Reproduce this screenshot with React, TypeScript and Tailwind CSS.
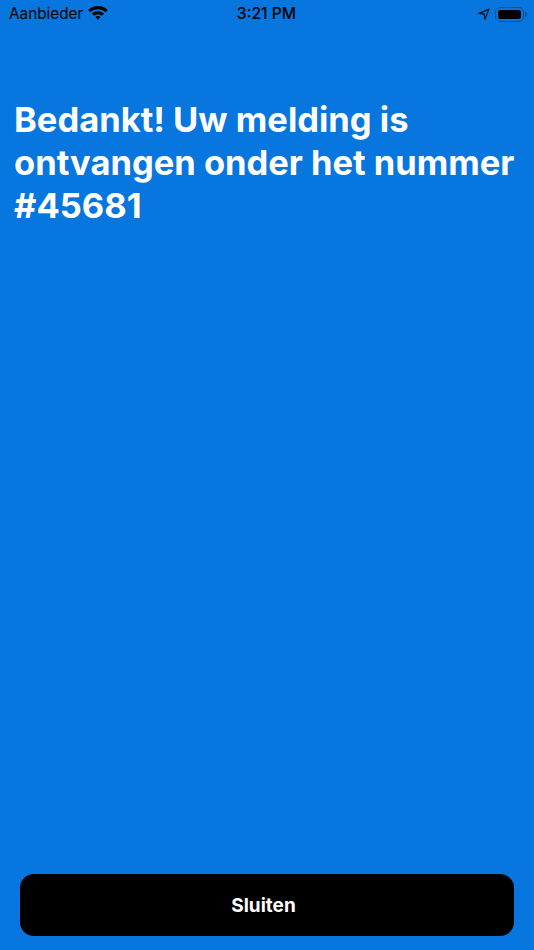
export default function App() {
  return (
    <div className="flex h-[950px] w-[534px] flex-col overflow-hidden bg-[#0776de] font-['Inter',sans-serif] text-white">
      <div className="flex h-[28px] items-center justify-between pr-[7px] pl-[9px] text-black">
        <div className="flex w-[180px] items-center gap-[5px]">
          <span className="text-[15.3px] leading-[28px]">Aanbieder</span>
          <svg width="20" height="15" viewBox="0 0 20 15" className="mb-[3px]">
            <path d="M0.2 5 A14 14 0 0 1 19.8 5 L17.6 7.3 A11 11 0 0 0 2.4 7.3 Z" fill="#000" />
            <path d="M3.9 8.6 A8.8 8.8 0 0 1 16.1 8.6 L13.9 10.8 A5.8 5.8 0 0 0 6.1 10.8 Z" fill="#000" />
            <path d="M7.5 12.1 A3.6 3.6 0 0 1 12.5 12.1 L10 14.8 Z" fill="#000" />
          </svg>
        </div>
        <span className="pr-[3px] text-[15.7px] leading-[28px] font-medium">3:21 PM</span>
        <div className="flex w-[180px] items-center justify-end gap-[5px]">
          <svg width="13" height="13" viewBox="0 0 13 13">
            <path d="M0.3 5.6 L12.8 0.2 L8 12.6 L6.6 6.8 Z M3.6 5.4 L7.7 5.5 L8.1 9.4 L11 2.2 Z" fill="#000" fillRule="evenodd" />
          </svg>
          <div className="flex items-center gap-[1px]">
            <div className="flex h-[15px] w-[29px] items-center justify-center rounded-[5px] border border-[#0a4f92]">
              <div className="h-[9px] w-[23px] rounded-[2.5px] bg-black" />
            </div>
            <div className="h-[5px] w-[2px] rounded-r-[2px] bg-[#0a4f92]" />
          </div>
        </div>
      </div>

      <h1 className="mt-[70px] px-[14px] text-[34.5px] leading-[43px] font-bold">
        Bedankt! Uw melding is ontvangen onder het nummer #45681
      </h1>

      <div className="mt-auto px-[20px] pb-[14px]">
        <button className="flex h-[62px] w-full items-center justify-center rounded-[14px] bg-black pt-[2px] pr-[7px] text-[19px] font-bold text-white">
          Sluiten
        </button>
      </div>
    </div>
  );
}
